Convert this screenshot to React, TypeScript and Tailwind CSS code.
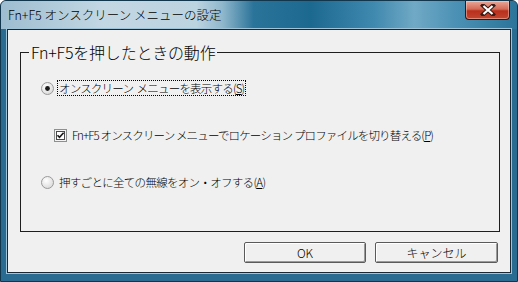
import React from "react";

// Win7 style radio button
function Radio({ checked }: { checked: boolean }) {
  return (
    <svg width="13" height="13" viewBox="0 0 13 13" className="shrink-0">
      <defs>
        <radialGradient id={checked ? "rg1" : "rg2"} cx="0.4" cy="0.35" r="0.7">
          <stop offset="0" stopColor="#ffffff" />
          <stop offset="1" stopColor="#d8d8d8" />
        </radialGradient>
      </defs>
      <circle cx="6.5" cy="6.5" r="6" fill={`url(#${checked ? "rg1" : "rg2"})`} stroke="#9a9a9a" />
      {checked && <circle cx="6.5" cy="6.5" r="2.4" fill="#1a1a1a" />}
    </svg>
  );
}

function Checkbox() {
  return (
    <svg width="13" height="13" viewBox="0 0 13 13" className="shrink-0">
      <rect x="0.5" y="0.5" width="12" height="12" fill="#f4f4f4" stroke="#8e8f8f" />
      <rect x="2.5" y="2.5" width="8" height="8" fill="#ffffff" stroke="#4a4a4a" />
      <path d="M3.5 6.2 L5.5 8.4 L9.6 3.8" fill="none" stroke="#1a1a1a" strokeWidth="1.6" />
    </svg>
  );
}

function CloseButton() {
  return (
    <button
      type="button"
      className="flex h-[19px] w-[45px] items-center justify-center rounded-b-[4px] border border-t-0 border-[#3a1410] bg-[linear-gradient(180deg,#e9a99b_0%,#d46a55_45%,#b8301d_55%,#c2472f_100%)] shadow-[inset_0_0_0_1px_rgba(255,220,210,0.45)]"
    >
      <svg width="16" height="12" viewBox="0 0 16 12">
        <path d="M3 1.5 L13 10.5 M13 1.5 L3 10.5" stroke="#3a1a14" strokeWidth="4.2" strokeLinecap="square" />
        <path d="M3.5 2 L12.5 10 M12.5 2 L3.5 10" stroke="#ffffff" strokeWidth="2.2" />
      </svg>
    </button>
  );
}

function Key({ k }: { k: string }) {
  return (
    <>
      (<span className="underline underline-offset-[1px]">{k}</span>)
    </>
  );
}

export default function App(): JSX.Element {
  return (
    <div className="flex h-[282px] w-[518px] flex-col overflow-hidden rounded-t-[6px] border border-[#12364c] bg-[#2a6b91] font-['Noto_Sans_CJK_JP','Liberation_Sans',sans-serif] text-black">
      {/* title bar */}
      <div className="-mx-px flex h-[28px] shrink-0 justify-between bg-[linear-gradient(90deg,#9dbdd0_0%,#c3d7e3_20%,#bcd3e0_38%,#8fb7cc_43%,#2a7399_49%,#1c6990_60%,#3f88ae_72%,#70a9c5_80%,#4b91b5_88%,#2b7399_100%)] pl-[8px] pr-[8px]">
        <div className="flex items-center text-[12.5px] font-light leading-none text-black">
          Fn+F5 オンスクリーン メニューの設定
        </div>
        <CloseButton />
      </div>

      {/* client area */}
      <div className="mx-[6px] flex h-[244px] flex-col border border-[#1b2833] bg-[#f0f0f0] text-[11.5px] font-light shadow-[0_0_0_1px_#9fc3d8]">
        <fieldset className="mt-[14px] ml-[12px] mr-[10px] h-[188px] border border-[#1e1e1e]">
          <legend className="ml-[8px] px-[2px] text-[16px] leading-[16px] tracking-[-0.2px]">
            Fn+F5を押したときの動作
          </legend>

          <div className="mt-[20px] flex flex-col pl-[20px]">
            <div className="flex h-[16px] items-center gap-[3px]">
              <Radio checked />
              <span className="whitespace-pre border border-dotted border-black px-[1px] leading-[14px] tracking-[-0.8px]">
                オンスクリーン  メニューを表示する<Key k="S" />
              </span>
            </div>

            <div className="mt-[31px] flex h-[16px] items-center gap-[5px] pl-[13px]">
              <Checkbox />
              <span className="leading-[14px] tracking-[-0.85px]">
                Fn+F5 オンスクリーン メニューでロケーション プロファイルを切り替える<Key k="P" />
              </span>
            </div>

            <div className="mt-[31px] flex h-[16px] items-center gap-[5px]">
              <Radio checked={false} />
              <span className="leading-[14px] tracking-[-0.7px]">
                押すごとに全ての無線をオン・オフする<Key k="A" />
              </span>
            </div>
          </div>
        </fieldset>

        <div className="mt-[10px] flex justify-end gap-[9px] pr-[12px]">
          <button
            type="button"
            className="h-[21px] w-[122px] rounded-[2px] border border-[#5a5a5a] bg-[#f0f0f0] text-[12px] leading-none shadow-[inset_1px_1px_0_#ffffff,inset_-1px_-1px_0_#9a9a9a]"
          >
            OK
          </button>
          <button
            type="button"
            className="h-[21px] w-[123px] rounded-[2px] border border-[#5a5a5a] bg-[#f0f0f0] text-[12px] leading-none shadow-[inset_1px_1px_0_#ffffff,inset_-1px_-1px_0_#9a9a9a]"
          >
            キャンセル
          </button>
        </div>
      </div>
    </div>
  );
}
